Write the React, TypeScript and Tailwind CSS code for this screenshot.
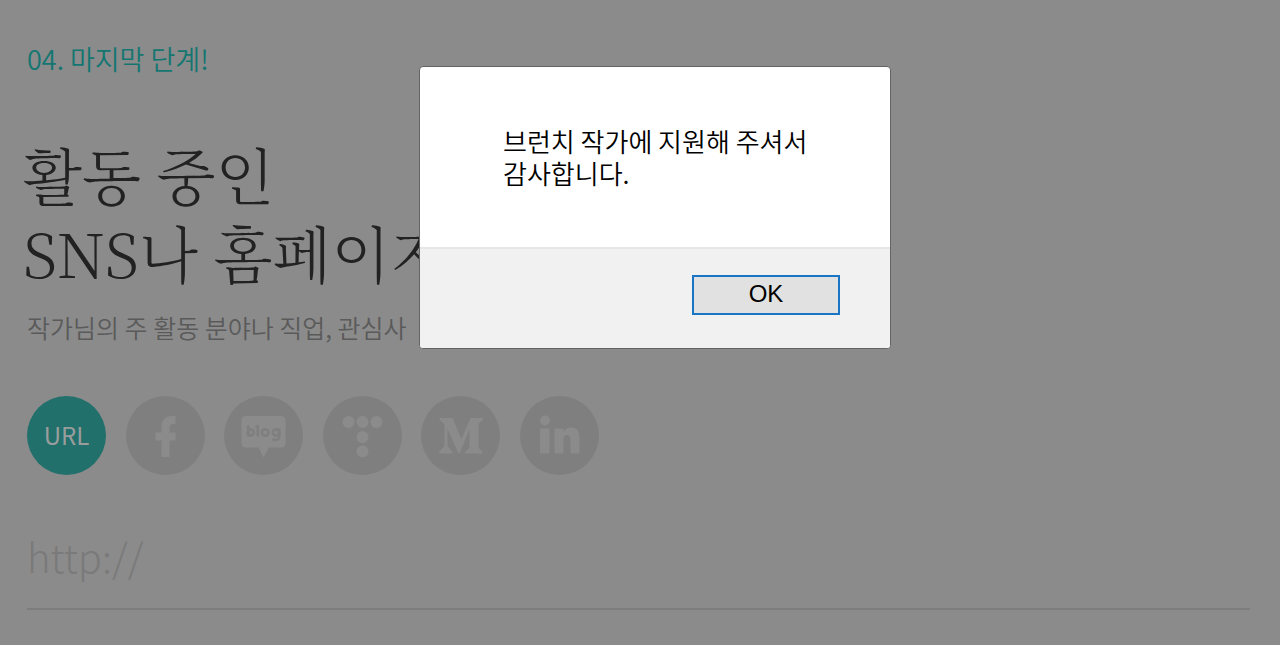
import type { ReactNode } from 'react';

const channels: { label: string; icon: ReactNode }[] = [
  {
    label: 'Facebook',
    icon: <path d="M35.500 61V44.500H29.500V36.500H35.500V31.500C35.500 24 39.500 20 45.500 20H49.500V28H46.500C44.500 28 43.500 29.500 43.500 31.500V36.500H49.500V44.500H43.500V61Z" />,
  },
  {
    label: 'Blog',
    icon: (
      <>
        <path d="M22 20H57Q61.500 20 61.500 24.500V47Q61.500 51.500 57 51.500H45L39.500 61.500L34.500 51.500H22Q17.500 51.500 17.500 47V24.500Q17.500 20 22 20Z" />
        <g fill="none" stroke="#7f7f7f" strokeWidth="2.600">
          <path d="M24.200 29.500V40.500M33.800 29V40.500M31.500 30.500H33.800M55.200 32.500V41Q55 44 51.500 44Q49.500 44 48.500 43" />
          <circle cx="26.800" cy="36.500" r="3" />
          <circle cx="41.200" cy="36.500" r="3.300" />
          <circle cx="52" cy="36.500" r="3.100" />
        </g>
      </>
    ),
  },
  {
    label: 'Tistory',
    icon: (
      <>
        <circle cx="25.500" cy="26" r="6" />
        <circle cx="39.500" cy="26" r="6" />
        <circle cx="53.500" cy="26" r="6" />
        <circle cx="39.500" cy="41" r="6" />
        <circle cx="39.500" cy="55.500" r="6" />
      </>
    ),
  },
  {
    label: 'Medium',
    icon: <path d="M18.500 22H31.500L40.500 43L49.500 22H62V23.500L57.500 28V51.500L61.500 56V57.500H44V56L48.500 51.500V33L38.500 57.500H37.500L26.500 33V50L31.500 56V57.500H18V56L23.500 50V28.500L18.500 23.500Z" />,
  },
  {
    label: 'LinkedIn',
    icon: (
      <>
        <circle cx="25" cy="24.500" r="5" />
        <path d="M20 32.500H29.500V57.500H20ZM34.500 32.500H43.500V36C45 33.500 47.500 31.500 51.500 31.500C57.500 31.500 59.500 36 59.500 42V57.500H50.500V44C50.500 41 49.500 39 47 39C44.500 39 43.500 41 43.500 44V57.500H34.500Z" />
      </>
    ),
  },
];

export default function App() {
  return (
    <div className="relative min-h-screen overflow-hidden bg-[#8b8b8b] font-['Noto_Sans_CJK_KR',sans-serif]">
      <main className="pt-[39px] pr-[30px] pl-[27px]">
        <p className="text-[27px] leading-10 font-[350] text-[#137671]">04. 마지막 단계!</p>
        <h1 className="mt-14 -ml-1 font-['Noto_Serif_CJK_KR','Liberation_Serif',serif] text-[61px] leading-[78px] font-light whitespace-nowrap text-[#222222]">
          활동 중인
          <br />
          SNS나 홈페이지
        </h1>
        <p className="mt-4 text-[25px] leading-10 font-[350] whitespace-nowrap text-[#5a5a5a]">
          작가님의 주 활동 분야나 직업, 관심사
        </p>
        <div className="mt-[49px] flex w-[572px] justify-between">
          <button
            type="button"
            className="size-[79px] rounded-full bg-[#22706b] pb-px text-2xl text-[#9a9d9d]"
          >
            URL
          </button>
          {channels.map(({ label, icon }) => (
            <button
              key={label}
              type="button"
              aria-label={label}
              className="size-[79px] rounded-full bg-[#7f7f7f] text-[#8b8b8b]"
            >
              <svg viewBox="0 0 79 79" className="size-full" fill="currentColor" aria-hidden="true">
                {icon}
              </svg>
            </button>
          ))}
        </div>
        <input
          type="url"
          aria-label="URL"
          placeholder="http://"
          className="mt-12 block h-[87px] w-full border-b-2 border-[#7d7d7d] bg-transparent pb-5 text-[40px] font-light text-[#333333] outline-none placeholder:text-[#7a7a7a] placeholder:opacity-100"
        />
      </main>

      <div className="absolute inset-0 flex items-start justify-center pt-[66px] pl-[30px]">
        <div
          role="alertdialog"
          aria-modal="true"
          aria-describedby="message"
          className="w-[472px] overflow-hidden rounded border border-[#646464] bg-white text-black"
        >
          <p
            id="message"
            className="h-[180px] pt-[58px] pl-[83px] text-[26px] leading-8 font-[350] whitespace-nowrap"
          >
            브런치 작가에 지원해 주셔서
            <br />
            감사합니다.
          </p>
          <div className="flex justify-end border-t-2 border-[#e6e6e6] bg-[#f1f1f1] pt-[26px] pr-[50px] pb-[33px]">
            <button
              type="button"
              className="h-10 w-[148px] border-2 border-[#1a76c4] bg-[#e1e1e1] pb-0.5 font-['Liberation_Sans',sans-serif] text-2xl"
            >
              OK
            </button>
          </div>
        </div>
      </div>
    </div>
  );
}
